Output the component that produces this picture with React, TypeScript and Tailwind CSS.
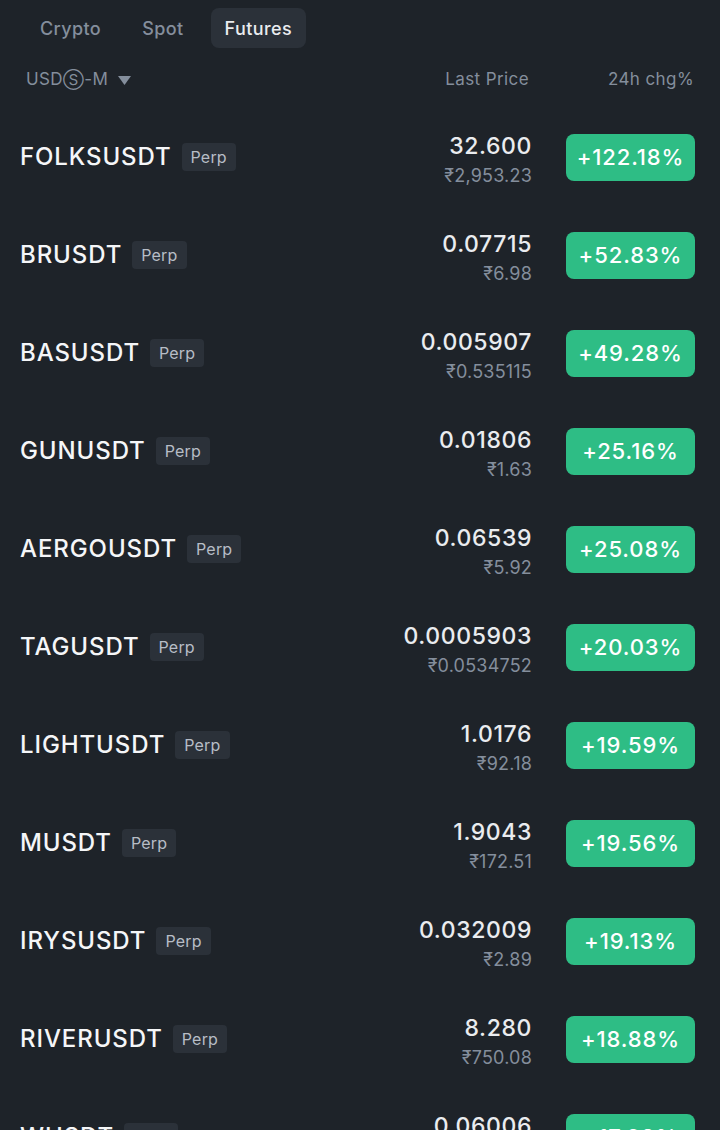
import { useState } from 'react';

type Row = { symbol: string; price: string; inr: string; chg: string };

const rows: Row[] = [
  { symbol: 'FOLKSUSDT', price: '32.600', inr: '₹2,953.23', chg: '+122.18%' },
  { symbol: 'BRUSDT', price: '0.07715', inr: '₹6.98', chg: '+52.83%' },
  { symbol: 'BASUSDT', price: '0.005907', inr: '₹0.535115', chg: '+49.28%' },
  { symbol: 'GUNUSDT', price: '0.01806', inr: '₹1.63', chg: '+25.16%' },
  { symbol: 'AERGOUSDT', price: '0.06539', inr: '₹5.92', chg: '+25.08%' },
  { symbol: 'TAGUSDT', price: '0.0005903', inr: '₹0.0534752', chg: '+20.03%' },
  { symbol: 'LIGHTUSDT', price: '1.0176', inr: '₹92.18', chg: '+19.59%' },
  { symbol: 'MUSDT', price: '1.9043', inr: '₹172.51', chg: '+19.56%' },
  { symbol: 'IRYSUSDT', price: '0.032009', inr: '₹2.89', chg: '+19.13%' },
  { symbol: 'RIVERUSDT', price: '8.280', inr: '₹750.08', chg: '+18.88%' },
  { symbol: 'WUSDT', price: '0.06006', inr: '₹5.44', chg: '+17.92%' },
];

const tabs = ['Crypto', 'Spot', 'Futures'];

export default function App() {
  const [active, setActive] = useState('Futures');

  return (
    <div
      className="h-[1130px] overflow-hidden bg-[#1e2329] text-[#eaecef]"
      style={{ fontFamily: 'Inter, "Noto Sans", sans-serif' }}
    >
      {/* tabs */}
      <div className="flex items-center gap-[13px] pl-[26px] pt-2">
        {tabs.map((t) => (
          <button
            key={t}
            onClick={() => setActive(t)}
            className={
              t === active
                ? 'h-10 rounded-lg bg-[#2b3139] px-[14px] text-[18px] font-medium tracking-[0.4px] text-[#eaecef]'
                : 'h-10 rounded-lg px-[14px] text-[18px] font-medium tracking-[0.4px] text-[#848e9c]'
            }
          >
            {t}
          </button>
        ))}
      </div>

      {/* header */}
      <div className="mt-[2px] flex h-[60px] items-center pl-[26px] pr-[26px] text-[17px] tracking-[0.4px] text-[#848e9c]">
        <div className="flex flex-1 items-center gap-[10px]">
          <span>
            USD<span className="text-[15px]">Ⓢ</span>-M
          </span>
          <svg width="13" height="9" viewBox="0 0 13 9">
            <path d="M0 0h13L6.5 9z" fill="#848e9c" />
          </svg>
        </div>
        <div className="w-[140px] text-right">Last Price</div>
        <div className="w-[165px] text-right">24h chg%</div>
      </div>

      {/* list */}
      <div className="-mt-[2px] flex flex-col">
        {rows.map((r) => (
          <div key={r.symbol} className="flex h-[98px] items-center pl-5 pr-[25px]">
            <div className="flex flex-1 items-center gap-[10px]">
              <span className="text-[24px] font-medium tracking-[0.9px] text-[#f5f6f8]">{r.symbol}</span>
              <span className="flex h-7 items-center rounded bg-[#2b3139] px-[9px] text-[16px] tracking-[0.2px] text-[#b7bdc6]">
                Perp
              </span>
            </div>
            <div className="flex flex-col items-end pt-[8px]">
              <span className="text-[23px] font-medium leading-[30px] tracking-[0.6px]">{r.price}</span>
              <span className="text-[18px] leading-[30px] tracking-[0.2px] text-[#848e9c]">{r.inr}</span>
            </div>
            <div className="ml-[34px] flex h-[47px] w-[129px] items-center justify-center rounded-lg bg-[#2ebd85] text-[22px] font-medium tracking-[0.9px] text-white">
              {r.chg}
            </div>
          </div>
        ))}
      </div>
    </div>
  );
}
